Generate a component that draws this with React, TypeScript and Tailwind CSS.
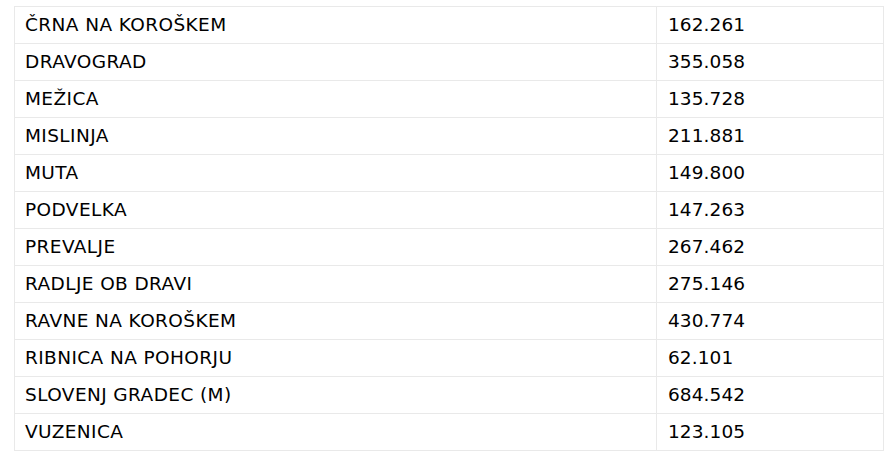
import React from 'react';

const rows: [string, string][] = [
  ['ČRNA NA KOROŠKEM', '162.261'],
  ['DRAVOGRAD', '355.058'],
  ['MEŽICA', '135.728'],
  ['MISLINJA', '211.881'],
  ['MUTA', '149.800'],
  ['PODVELKA', '147.263'],
  ['PREVALJE', '267.462'],
  ['RADLJE OB DRAVI', '275.146'],
  ['RAVNE NA KOROŠKEM', '430.774'],
  ['RIBNICA NA POHORJU', '62.101'],
  ['SLOVENJ GRADEC (M)', '684.542'],
  ['VUZENICA', '123.105'],
];

const App = () => {
  return (
    <div className="min-h-screen bg-white pt-[6px] pl-[14px]">
      <table
        className="w-[870px] border-collapse text-[18.5px] text-black"
        style={{ fontFamily: '"DejaVu Sans", Verdana, sans-serif' }}
      >
        <tbody>
          {rows.map(([name, value]) => (
            <tr key={name} className="h-[37px]">
              <td className="w-[642px] border border-[#e9e9e9] px-[10px] py-0 leading-none tracking-[0.4px]">
                {name}
              </td>
              <td className="border border-[#e9e9e9] px-[11px] py-0 leading-none tracking-[0.1px]">
                {value}
              </td>
            </tr>
          ))}
        </tbody>
      </table>
    </div>
  );
};

export default App;
